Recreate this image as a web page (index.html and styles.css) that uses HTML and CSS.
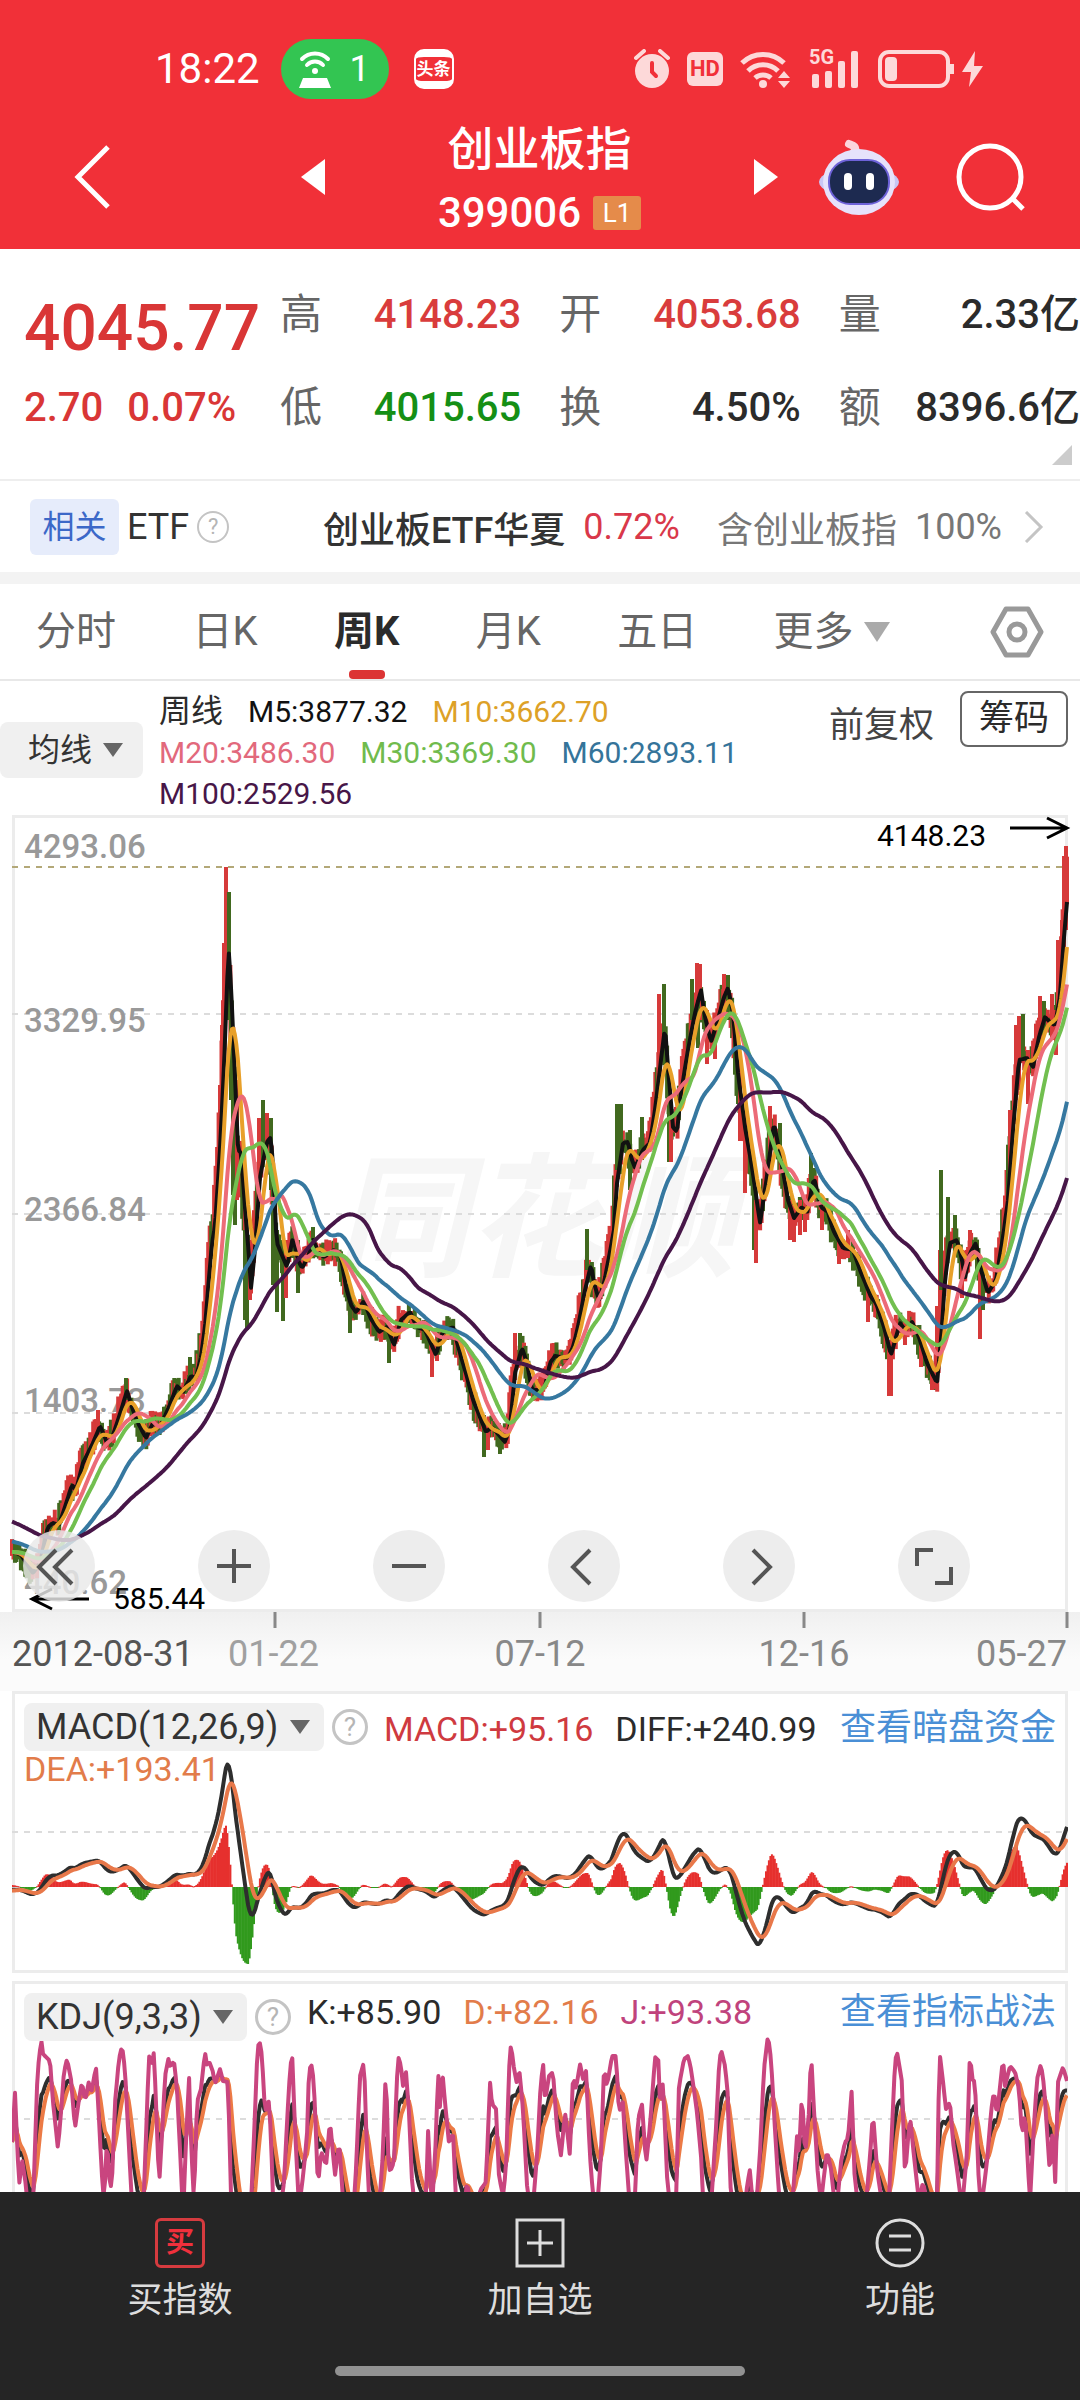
FILE: index.html
```html
<!DOCTYPE html>
<html lang="zh-CN">
<head>
  <meta charset="UTF-8" />
  <meta name="viewport" content="width=device-width, initial-scale=1.0"/>
  <title>创业板指 399006</title>
  <link rel="stylesheet" href="styles.css">
</head>
<body>
  <header class="top">
    <div class="status">
      <span class="clock">18:22</span>
      <span class="hotspot">
        <svg width="32" height="38" viewBox="0 0 32 38" fill="none" stroke="#fff" stroke-width="4" stroke-linecap="round">
          <path d="M3 9a18 18 0 0 1 26 0M8 15a11 11 0 0 1 16 0"/>
          <circle cx="16" cy="21" r="3" fill="#fff" stroke="none"/>
          <path d="M4 28h24l4 10H0z" fill="#fff" stroke="none"/>
        </svg>
        1
      </span>
      <span class="news">头条</span>
      <span class="status-icons">
        <svg width="36" height="40" viewBox="0 0 36 40">
          <circle cx="18" cy="22" r="17" fill="#fdd9d9"/>
          <path d="M2 9l8-7M34 9l-8-7" stroke="#fdd9d9" stroke-width="4" stroke-linecap="round"/>
          <path d="M18 14v9l4 4" stroke="#f13038" stroke-width="4" fill="none" stroke-linecap="round"/>
        </svg>
        <span class="hd">HD</span>
        <svg width="52" height="40" viewBox="0 0 52 40" fill="none" stroke="#fdd9d9" stroke-width="5">
          <path d="M2 14a30 30 0 0 1 42 0M8 22a21 21 0 0 1 30 0M15 29a12 12 0 0 1 16 0"/>
          <circle cx="23" cy="35" r="4" fill="#fdd9d9" stroke="none"/>
          <path d="M38 29l6-7 6 7zM38 32l6 7 6-7z" fill="#fdd9d9" stroke="none"/>
        </svg>
        <span class="signal">
          <small>5G</small>
          <svg width="52" height="40" viewBox="0 0 52 40" fill="#fdd9d9">
            <rect x="3" y="25" width="7" height="14" rx="2"/><rect x="16" y="22" width="7" height="17" rx="2"/>
            <rect x="29" y="12" width="7" height="27" rx="2"/><rect x="42" y="2" width="7" height="37" rx="2"/>
          </svg>
        </span>
        <svg width="108" height="40" viewBox="0 0 108 40">
          <rect x="2" y="3" width="68" height="34" rx="9" fill="none" stroke="#fdd9d9" stroke-width="4"/>
          <rect x="7" y="8" width="12" height="24" rx="4" fill="#fdd9d9"/>
          <path d="M74 15v10" stroke="#fdd9d9" stroke-width="4"/>
          <path d="M97 2L84 23h9l-2 15 14-21h-9z" fill="#fdd9d9"/>
        </svg>
      </span>
    </div>
    <div class="title-bar">
      <button class="icon-btn" aria-label="返回">
        <svg width="40" height="66" viewBox="0 0 40 66" fill="none" stroke="#fff" stroke-width="5"><path d="M35 3L5 33l30 30"/></svg>
      </button>
      <button class="icon-btn prev" aria-label="上一只">
        <svg width="24" height="36" viewBox="0 0 24 36" fill="#fff"><path d="M24 0v36L0 18z"/></svg>
      </button>
      <div class="title">
        <h1>创业板指</h1>
        <div class="code">399006 <span>L1</span></div>
      </div>
      <button class="icon-btn next" aria-label="下一只">
        <svg width="24" height="36" viewBox="0 0 24 36" fill="#fff"><path d="M0 0v36l24-18z"/></svg>
      </button>
      <button class="icon-btn robot" aria-label="助手">
        <svg width="82" height="78" viewBox="0 0 82 78">
          <path d="M36 14c4-6-3-7-5-8" stroke="#fbd5dc" stroke-width="8" fill="none" stroke-linecap="round"/>
          <ellipse cx="41" cy="44" rx="40" ry="15" fill="#c9c6f5"/>
          <ellipse cx="41" cy="44" rx="36" ry="33" fill="#e6e2fb"/>
          <rect x="11" y="22" width="60" height="44" rx="21" fill="#1d2a50" stroke="#6d62d8" stroke-width="2"/>
          <rect x="26" y="35" width="8" height="17" rx="4" fill="#fff"/><rect x="48" y="35" width="8" height="17" rx="4" fill="#fff"/>
        </svg>
      </button>
      <button class="icon-btn" aria-label="搜索">
        <svg width="70" height="70" viewBox="0 0 70 70" fill="none" stroke="#fff" stroke-width="5"><circle cx="34" cy="35" r="31"/><path d="M56 56l11 11"/></svg>
      </button>
    </div>
  </header>

  <section class="quote">
    <div class="now">
      <strong>4045.77</strong>
      <div><span>2.70</span><span>0.07%</span></div>
    </div>
    <dl>
      <div><dt>高</dt><dd class="up">4148.23</dd></div>
      <div><dt>开</dt><dd class="up">4053.68</dd></div>
      <div><dt>量</dt><dd>2.33亿</dd></div>
      <div><dt>低</dt><dd class="down">4015.65</dd></div>
      <div><dt>换</dt><dd>4.50%</dd></div>
      <div><dt>额</dt><dd>8396.6亿</dd></div>
    </dl>
    <i class="corner"></i>
  </section>

  <a class="etf" href="#etf">
    <span class="tag">相关</span>
    <span>ETF</span>
    <span class="help">?</span>
    <span class="etf-name">创业板ETF华夏</span>
    <span class="etf-rate">0.72%</span>
    <span class="etf-note">含创业板指</span>
    <span class="etf-pct">100%</span>
    <svg width="20" height="32" viewBox="0 0 20 32" fill="none" stroke="#c4c4c4" stroke-width="3"><path d="M2 1l15 15L2 31"/></svg>
  </a>

  <nav class="tabs">
    <button>分时</button>
    <button>日K</button>
    <button class="selected">周K</button>
    <button>月K</button>
    <button>五日</button>
    <button class="more">更多<i class="caret"></i></button>
    <button class="setting" aria-label="设置">
      <svg width="54" height="52" viewBox="0 0 54 52" fill="none" stroke="#999" stroke-width="5" stroke-linejoin="round"><path d="M16 3h22l13 23-13 23H16L3 26z"/><circle cx="27" cy="26" r="8"/></svg>
    </button>
  </nav>

  <section class="legend">
    <label class="picker line-picker">
      <select aria-label="指标线"><option>均线</option></select>
    </label>
    <div class="values">
      <span class="week">周线</span><span class="m5">M5:3877.32</span><span class="m10">M10:3662.70</span>
      <span class="m20">M20:3486.30</span><span class="m30">M30:3369.30</span><span class="m60">M60:2893.11</span>
      <span class="m100">M100:2529.56</span>
    </div>
    <button class="adjust">前复权</button>
    <button class="chips">筹码</button>
  </section>

  <section class="panel price">
    <svg class="chart" id="price" viewBox="12 815 1056 797">
      <text class="watermark" x="334" y="1266">同花顺</text>
      <path class="grid" d="M12 1014H1068M12 1214H1068M12 1413H1068"/>
      <path class="top-line" d="M12 867H1068"/>
      <g class="scale">
        <text x="24" y="858">4293.06</text>
        <text x="24" y="1032">3329.95</text>
        <text x="24" y="1221">2366.84</text>
        <text x="24" y="1412">1403.73</text>
        <text x="24" y="1594">440.62</text>
      </g>
      <g id="priceLines"></g>
      <g class="mark">
        <text x="877" y="846">4148.23</text>
        <path d="M1010 828h56M1047 818l20 10-20 10"/>
        <text x="113" y="1609">585.44</text>
        <path d="M89 1599H33M52 1589l-20 10 20 10"/>
      </g>
    </svg>
    <div class="tools">
      <button aria-label="最早"><svg viewBox="0 0 72 72"><path d="M33 20L16 37l17 17M49 20L32 37l17 17"/></svg></button>
      <button aria-label="放大"><svg viewBox="0 0 72 72"><path d="M19 36h34M36 19v34"/></svg></button>
      <button aria-label="缩小"><svg viewBox="0 0 72 72"><path d="M19 36h34"/></svg></button>
      <button aria-label="左移"><svg viewBox="0 0 72 72"><path d="M42 20L25 37l17 17"/></svg></button>
      <button aria-label="右移"><svg viewBox="0 0 72 72"><path d="M30 20l17 17-17 17"/></svg></button>
      <button aria-label="全屏"><svg viewBox="0 0 72 72"><path d="M19 36V20h16M37 53h16V37"/></svg></button>
    </div>
  </section>

  <svg class="axis" viewBox="0 0 1080 79">
    <path d="M275 0v16M540 0v16M804 0v16M1067 0v16"/>
    <text class="first" x="12" y="54">2012-08-31</text>
    <text class="fade" x="228" y="54">01-22</text>
    <text x="540" y="54" text-anchor="middle">07-12</text>
    <text x="804" y="54" text-anchor="middle">12-16</text>
    <text x="1067" y="54" text-anchor="end">05-27</text>
  </svg>

  <section class="panel">
    <svg class="chart" viewBox="12 1692 1056 282">
      <path class="grid" d="M12 1833H1068"/>
      <g id="macd"></g>
    </svg>
    <div class="panel-head">
      <label class="picker"><select aria-label="指标"><option>MACD(12,26,9)</option></select></label>
      <span class="help">?</span>
      <span class="v-red">MACD:+95.16</span>
      <span>DIFF:+240.99</span>
      <a href="#fund">查看暗盘资金</a>
      <span class="v-orange second">DEA:+193.41</span>
    </div>
  </section>

  <section class="panel kdj">
    <svg class="chart" viewBox="12 1982 1056 211">
      <path class="grid" d="M12 2120H1068"/>
      <g id="kdj"></g>
    </svg>
    <div class="panel-head">
      <label class="picker"><select aria-label="指标"><option>KDJ(9,3,3)</option></select></label>
      <span class="help">?</span>
      <span>K:+85.90</span>
      <span class="v-orange">D:+82.16</span>
      <span class="v-pink">J:+93.38</span>
      <a href="#how">查看指标战法</a>
    </div>
  </section>

  <footer class="bottom">
    <div class="actions">
      <button><span class="buy">买</span>买指数</button>
      <button>
        <svg width="50" height="50" viewBox="0 0 50 50" fill="none" stroke="#ddd" stroke-width="3"><path d="M2 2h46v46H2zM12 25h26M25 12v26"/></svg>
        加自选
      </button>
      <button>
        <svg width="50" height="50" viewBox="0 0 50 50" fill="none" stroke="#ddd" stroke-width="3"><circle cx="25" cy="25" r="23"/><path d="M14 18h22M14 32h22"/></svg>
        功能
      </button>
    </div>
    <div class="home-bar"></div>
  </footer>

  <script src="chart.js"></script>
</body>
</html>
```
FILE: styles.css
```css
* {
  box-sizing: border-box;
}

body {
  margin: 0;
  min-height: 100vh;
  display: flex;
  flex-direction: column;
  background: #fff;
  color: #2b2b2b;
  font-family: Roboto, "Noto Sans CJK SC", sans-serif;
}

button, select {
  font: inherit;
  color: inherit;
  background: none;
  border: none;
  padding: 0;
  margin: 0;
  cursor: pointer;
}

a {
  text-decoration: none;
}

svg {
  display: block;
  flex: none;
}

/* header */
.top {
  background: #f13038;
  color: #fff;
  height: 249px;
}

.status {
  display: flex;
  align-items: center;
  height: 118px;
  padding: 20px 94px 0 155px;
}

.clock {
  font-size: 42px;
  line-height: 48px;
}

.hotspot {
  display: flex;
  align-items: center;
  justify-content: center;
  gap: 18px;
  width: 108px;
  height: 60px;
  margin-left: 21px;
  border-radius: 30px;
  background: #33c552;
  font-size: 36px;
}

.news {
  width: 40px;
  margin-left: 25px;
  border: solid #fff;
  border-width: 8px 2px;
  border-radius: 10px;
  font-size: 17px;
  line-height: 24px;
  font-weight: bold;
  text-align: center;
}

.status-icons {
  display: flex;
  align-items: center;
  gap: 17px;
  margin-left: auto;
}

.hd {
  width: 36px;
  border-radius: 6px;
  background: #fdd9d9;
  color: #f13038;
  font-size: 22px;
  font-weight: bold;
  line-height: 34px;
  text-align: center;
}

.signal {
  position: relative;
}

.signal small {
  position: absolute;
  top: -4px;
  left: 0;
  color: #fdd9d9;
  font-size: 20px;
  font-weight: bold;
}

.title-bar {
  display: flex;
  align-items: center;
  height: 127px;
  padding: 0 54px 0 73px;
}

.icon-btn {
  padding-bottom: 10px;
}

.prev {
  margin-left: 188px;
}

.title {
  flex: 1;
  text-align: center;
}

.title h1 {
  margin: 0;
  font-size: 46px;
  font-weight: 500;
  line-height: 62px;
}

.code {
  display: flex;
  align-items: center;
  justify-content: center;
  gap: 12px;
  font-size: 42px;
  font-weight: 500;
  line-height: 66px;
}

.code span {
  width: 48px;
  background: #e58b4a;
  border-radius: 3px;
  font-size: 26px;
  font-weight: 400;
  line-height: 34px;
}

.robot {
  margin: 0 56px 0 40px;
}

/* quote */
.quote {
  position: relative;
  display: flex;
  height: 232px;
  padding: 36px 0 0 24px;
  border-bottom: 2px solid #eee;
}

.now {
  width: 256px;
  color: #d93636;
  font-weight: 500;
}

.now strong {
  display: block;
  font-size: 64px;
  font-weight: 500;
  line-height: 88px;
}

.now div {
  display: flex;
  gap: 24px;
  font-size: 40px;
  line-height: 70px;
}

.quote dl {
  flex: 1;
  display: grid;
  grid-template-columns: repeat(3, 1fr);
  grid-auto-rows: 60px;
  gap: 33px 38px;
  margin: 0;
}

.quote dl div {
  display: flex;
  justify-content: space-between;
  font-size: 40px;
  line-height: 60px;
}

.quote dt {
  color: #666;
  font-size: 42px;
}

.quote dd {
  margin: 0;
  font-weight: 500;
}

.quote .up {
  color: #d93c3c;
}

.quote .down {
  color: #158f15;
}

.corner {
  position: absolute;
  right: 8px;
  bottom: 14px;
  border-left: 20px solid transparent;
  border-bottom: 20px solid #ccc;
}

/* etf */
.etf {
  display: flex;
  align-items: center;
  height: 91px;
  padding: 0 36px 0 30px;
  color: #333;
  font-size: 36px;
}

.tag {
  width: 89px;
  margin-right: 8px;
  border-radius: 6px;
  background: #e6ecfb;
  color: #3c68c8;
  font-size: 32px;
  line-height: 56px;
  text-align: center;
}

.help {
  flex: none;
  width: 36px;
  border: 3px solid #c4c4c4;
  border-radius: 50%;
  color: #b5b5b5;
  font-size: 26px;
  line-height: 30px;
  text-align: center;
}

.etf .help {
  width: 32px;
  margin-left: 8px;
  border-width: 2px;
  font-size: 22px;
  line-height: 28px;
}

.etf-name {
  margin-left: auto;
  font-weight: 500;
}

.etf-rate {
  margin: 0 37px 0 18px;
  color: #d9384a;
}

.etf-note, .etf-pct {
  color: #777;
}

.etf-pct {
  margin: 0 22px 0 18px;
}

/* tabs */
.tabs {
  display: flex;
  justify-content: space-between;
  align-items: center;
  height: 109px;
  padding: 0 36px;
  border-top: 12px solid #f3f3f3;
  border-bottom: 2px solid #e8e8e8;
  color: #666;
  font-size: 40px;
  line-height: 95px;
}

.selected {
  position: relative;
  color: #2b2b2b;
  font-weight: bold;
}

.selected::after {
  content: "";
  position: absolute;
  left: 50%;
  bottom: 0;
  width: 36px;
  height: 9px;
  margin-left: -18px;
  border-radius: 4px;
  background: #dc3434;
}

.more {
  display: flex;
  align-items: center;
  gap: 10px;
}

.caret {
  border: 13px solid transparent;
  border-top: 20px solid #aaa;
  border-bottom: none;
}

.setting {
  margin-left: 24px;
}

/* legend */
.legend {
  display: flex;
  align-items: flex-start;
  height: 134px;
  padding: 10px 12px 0 0;
}

.picker {
  position: relative;
  flex: none;
  background: #f0f0f0;
  border-radius: 8px;
}

.picker select {
  appearance: none;
  display: block;
  height: 48px;
  padding: 0 45px 0 12px;
  color: #333;
  font-size: 36px;
  line-height: 48px;
}

.picker::after {
  content: "";
  position: absolute;
  right: 14px;
  top: 50%;
  margin-top: -7px;
  border: 10px solid transparent;
  border-top: 14px solid #666;
  border-bottom: none;
  pointer-events: none;
}

.line-picker {
  margin-top: 31px;
}

.line-picker select {
  height: 56px;
  padding: 0 50px 0 28px;
  font-size: 32px;
}

.line-picker::after {
  right: 20px;
}

.values {
  flex: 1;
  display: flex;
  flex-wrap: wrap;
  column-gap: 25px;
  margin: 0 50px 0 16px;
  font-size: 30px;
  line-height: 41px;
}

.week { font-size: 32px; }
.m5 { color: #111; }
.m10 { color: #dda127; margin-right: 150px; }
.m20 { color: #e2697c; }
.m30 { color: #70bb4d; }
.m60 { color: #35749a; }
.m100 { color: #471648; }

.adjust {
  margin-right: 26px;
  color: #444;
  font-size: 35px;
  line-height: 70px;
}

.chips {
  width: 108px;
  border: 2px solid #666;
  border-radius: 8px;
  font-size: 35px;
  line-height: 52px;
}

/* charts */
.panel {
  position: relative;
  display: grid;
  margin: 0 12px;
  border: 3px solid #ececec;
}

.panel > * {
  grid-area: 1 / 1;
}

.chart {
  width: calc(100% + 6px);
  height: auto;
  margin: -3px;
}

.price .chart {
  overflow: visible;
}

.watermark {
  fill: #f6f6f6;
  font-size: 134px;
  font-weight: 700;
  font-style: italic;
}

.grid {
  stroke: #dcdcdc;
  stroke-width: 2;
  stroke-dasharray: 6 6;
}

.top-line {
  stroke: #b3a878;
  stroke-width: 2;
  stroke-dasharray: 6 6;
}

.scale {
  fill: #999;
  font-size: 33px;
  font-weight: 500;
}

.mark {
  fill: #000;
  font-size: 30px;
}

.mark path {
  fill: none;
  stroke: #000;
  stroke-width: 3;
}

.line {
  fill: none;
  stroke-width: 4;
  stroke-linejoin: round;
}

.tools {
  position: absolute;
  left: 8px;
  bottom: 7px;
  display: flex;
  gap: 103px;
}

.tools button {
  width: 72px;
  height: 72px;
  border-radius: 50%;
  background: rgba(233, 233, 233, 0.82);
}

.tools path {
  fill: none;
  stroke: #555;
  stroke-width: 4;
}

.axis {
  width: 100%;
  height: auto;
  background: linear-gradient(#f0f0f0, #fbfbfb 60%);
  fill: #888;
  font-size: 36px;
}

.axis path {
  stroke: #888;
  stroke-width: 3;
}

.axis .first {
  fill: #555;
}

.axis .fade {
  fill: #a0a0a0;
}

.panel-head {
  display: flex;
  flex-wrap: wrap;
  align-items: flex-start;
  align-content: flex-start;
  padding: 9px 9px 0 9px;
  font-size: 34px;
  line-height: 42px;
  position: relative;
}

.panel-head .help {
  margin: 6px 16px 0 8px;
}

.panel-head > span {
  margin-right: 22px;
  margin-top: 5px;
}

.panel-head span + a {
  margin-left: -12px;
}

.panel-head a {
  flex: 1;
  color: #4a8fd6;
  font-size: 36px;
  line-height: 50px;
  text-align: right;
}

.panel-head .second {
  width: 100%;
  margin-top: -5px;
}

.v-red { color: #cf3a40; }
.v-orange { color: #e27c4a; }
.v-pink { color: #c0437c; }

.kdj {
  margin-top: 8px;
  border-bottom: none;
}

.kdj .chart {
  margin-bottom: 0;
}

.kdj .panel-head > span:not(.help) {
  margin-top: -2px;
}

.kdj .panel-head a {
  margin-top: -6px;
}

/* bottom */
.bottom {
  flex: 1;
  position: relative;
  background: #252525;
  color: #ddd;
  padding-bottom: 24px;
  display: flex;
  flex-direction: column;
  justify-content: space-between;
  align-items: center;
}

.actions {
  display: grid;
  grid-template-columns: repeat(3, 1fr);
  width: 100%;
  padding-top: 26px;
}

.actions button {
  display: flex;
  flex-direction: column;
  align-items: center;
  gap: 7px;
  font-size: 35px;
  line-height: 52px;
}

.buy {
  width: 50px;
  border: 3px solid #d63b3f;
  border-radius: 6px;
  color: #f0303c;
  font-size: 28px;
  font-weight: bold;
  line-height: 44px;
}

.home-bar {
  width: 38%;
  height: 10px;
  border-radius: 5px;
  background: #929292;
}
```
FILE: chart.js
```js
const LEFT = 12;
const RIGHT = 1067;
const WEEKS = 716;
const STEP = (RIGHT - LEFT) / (WEEKS - 1);

// 5-week average, as x,y pairs
const base = [
  14,1552, 21,1555, 33,1573, 40,1563, 45,1540, 48,1527, 53,1523, 59,1525, 64,1510, 72,1485, 76,1490, 83,1463,
  93,1443, 100,1426, 104,1435, 107,1443, 112,1438, 119,1417, 127,1391, 133,1410, 138,1423, 146,1438, 153,1423,
  160,1427, 169,1407, 177,1386, 183,1392, 191,1376, 196,1378, 201,1357, 205,1327, 208,1290, 212,1243, 215,1227,
  220,1150, 224,1067, 227,983, 229,952, 231,987, 234,1053, 238,1150, 241,1153, 245,1207, 249,1257, 251,1288,
  255,1250, 260,1177, 267,1142, 271,1137, 274,1183, 276,1230, 277,1243, 284,1260, 287,1267, 293,1237, 298,1260,
  302,1268, 308,1257, 313,1240, 319,1253, 324,1257, 334,1250, 341,1257, 346,1287, 351,1305, 356,1312, 364,1301,
  370,1317, 379,1332, 387,1327, 394,1345, 401,1320, 410,1312, 417,1327, 425,1330, 436,1355, 442,1333, 453,1327,
  460,1353, 467,1377, 473,1400, 480,1417, 486,1432, 492,1427, 505,1442, 510,1427, 515,1373, 522,1348, 527,1363,
  532,1390, 540,1390, 545,1387, 550,1363, 555,1356, 568,1358, 573,1347, 578,1327, 585,1290, 591,1265, 594,1283,
  599,1300, 604,1283, 609,1257, 614,1230, 617,1183, 623,1143, 628,1142, 631,1157, 635,1168, 643,1150, 650,1143,
  655,1110, 661,1060, 665,1027, 668,1067, 673,1127, 677,1132, 681,1093, 688,1050, 695,1013, 701,990, 705,1017,
  711,1042, 717,1023, 724,997, 728,988, 733,1013, 738,1073, 745,1127, 752,1167, 760,1223, 766,1183, 774,1123,
  781,1160, 788,1200, 794,1218, 802,1207, 807,1213, 814,1178, 821,1207, 828,1212, 833,1230, 843,1248, 853,1250,
  860,1270, 871,1297, 876,1303, 884,1327, 891,1355, 900,1323, 905,1330, 912,1322, 919,1337, 927,1363, 937,1383,
  941,1340, 945,1280, 950,1243, 957,1240, 962,1260, 965,1278, 970,1253, 976,1243, 981,1270, 988,1293, 996,1280,
  1003,1237, 1008,1200, 1013,1130, 1019,1060, 1027,1058, 1033,1067, 1039,1037, 1045,1017, 1051,1023, 1055,1025,
  1060,997, 1063,950, 1067,902, 1071,860
];

// long bars: x, top, bottom, 1 = up
const spikes = [
  [98,1410,1440,1], [126,1378,1400,0], [190,1357,1385,0], [222,1025,1090,1], [224,943,1040,1], [226,867,1010,1],
  [229,892,1020,0], [231,1000,1100,0], [233,1100,1195,0], [235,1170,1225,0], [237,1080,1200,1], [245,1230,1320,0],
  [247,1230,1330,0], [250,1240,1300,1], [259,1118,1180,1], [263,1100,1160,0], [267,1113,1160,1], [271,1118,1190,0],
  [273,1180,1285,0], [277,1230,1312,0], [283,1240,1321,0], [286,1240,1298,1], [298,1240,1293,0], [313,1227,1250,0],
  [350,1290,1333,0], [389,1325,1363,0], [432,1340,1377,1], [484,1415,1457,0], [488,1420,1450,1], [500,1430,1454,0],
  [515,1333,1380,1], [520,1333,1360,0], [587,1229,1270,0], [617,1104,1170,0], [621,1104,1160,0], [630,1130,1190,0],
  [642,1117,1160,0], [659,994,1060,1], [664,984,1040,0], [669,1090,1162,0], [671,1120,1162,1], [692,979,1020,0],
  [697,963,1010,1], [700,964,1020,1], [698,1000,1048,0], [707,1010,1064,1], [715,1020,1059,1], [724,974,1010,1],
  [728,975,1020,0], [740,1060,1141,1], [745,1110,1193,1], [754,1180,1250,0], [756,1200,1263,1], [770,1106,1170,1],
  [780,1123,1160,0], [790,1200,1240,1], [794,1205,1242,1], [800,1200,1235,1], [805,1200,1232,1], [811,1153,1190,0],
  [822,1200,1230,1], [839,1235,1264,1], [848,1230,1258,1], [868,1290,1322,1], [889,1340,1396,1], [891,1340,1396,1],
  [905,1320,1345,1], [921,1340,1367,1], [932,1370,1390,1], [937,1306,1388,1], [940,1250,1340,1], [941,1170,1290,0],
  [948,1197,1250,0], [955,1215,1250,0], [962,1250,1298,1], [970,1230,1260,1], [980,1260,1339,1], [983,1260,1310,0],
  [1010,1110,1180,1], [1016,1025,1100,1], [1019,1016,1090,1], [1023,1014,1060,0], [1028,1050,1104,1],
  [1040,996,1050,1], [1044,1001,1030,0], [1052,994,1040,1], [1056,1010,1055,1], [1058,940,1020,1],
  [1062,920,1000,1], [1064,856,940,1], [1066,846,930,1]
];

// J line of KDJ
const jLine = [
  12,2143, 15,2093, 19,2187, 22,2160, 26,2187, 29,2225, 33,2210, 37,2087, 39,2057, 42,2040, 43,2055, 50,2062,
  53,2103, 58,2150, 61,2113, 64,2073, 67,2060, 71,2080, 75,2130, 79,2100, 82,2083, 85,2102, 89,2082, 91,2095,
  96,2068, 98,2103, 102,2177, 104,2203, 107,2140, 110,2190, 112,2183, 115,2103, 119,2060, 122,2047, 125,2070,
  128,2130, 132,2205, 138,2237, 143,2217, 146,2137, 149,2057, 152,2065, 154,2052, 157,2130, 159,2187, 162,2137,
  165,2077, 169,2057, 170,2068, 174,2062, 177,2090, 181,2170, 183,2220, 186,2143, 189,2077, 191,2143, 194,2203,
  197,2103, 201,2090, 205,2053, 207,2067, 209,2062, 213,2073, 215,2085, 220,2070, 223,2082, 228,2083, 230,2157,
  232,2237, 241,2260, 250,2230, 254,2137, 257,2063, 259,2039, 262,2057, 265,2113, 269,2102, 271,2137, 273,2203,
  278,2230, 284,2183, 289,2087, 292,2050, 295,2130, 299,2210, 303,2177, 307,2137, 309,2070, 312,2066, 314,2087,
  318,2188, 321,2152, 324,2160, 326,2167, 330,2122, 335,2177, 339,2143, 342,2183, 344,2223, 351,2253, 356,2170,
  360,2077, 364,2063, 367,2153, 370,2220, 377,2237, 383,2153, 386,2065, 388,2157, 390,2173, 394,2163, 396,2103,
  398,2057, 401,2067, 403,2087, 406,2073, 409,2113, 412,2183, 417,2223, 423,2217, 426,2203, 428,2130, 432,2210,
  436,2137, 438,2068, 440,2110, 442,2069, 445,2103, 449,2145, 453,2133, 456,2203, 463,2223, 467,2182, 472,2217,
  481,2190, 486,2183, 490,2083, 492,2105, 496,2110, 499,2177, 503,2197, 506,2170, 509,2070, 511,2045, 514,2070,
  517,2085, 519,2068, 523,2110, 527,2187, 532,2220, 537,2157, 540,2097, 543,2062, 545,2103, 549,2077, 553,2073,
  557,2130, 561,2157, 565,2113, 570,2157, 573,2077, 576,2090, 580,2065, 583,2080, 586,2072, 590,2157, 593,2197,
  597,2210, 601,2157, 604,2068, 607,2087, 612,2057, 616,2057, 619,2113, 623,2103, 625,2140, 629,2197, 635,2203,
  638,2120, 642,2105, 646,2165, 650,2127, 655,2058, 659,2062, 660,2110, 663,2083, 667,2177, 671,2217, 676,2203,
  679,2087, 684,2060, 688,2057, 691,2070, 697,2113, 701,2157, 704,2217, 710,2223, 716,2130, 719,2067, 721,2050,
  725,2067, 728,2097, 730,2183, 736,2237, 743,2237, 747,2187, 750,2170, 753,2210, 757,2197, 760,2153, 764,2070,
  768,2036, 771,2060, 775,2130, 779,2197, 786,2230, 793,2197, 797,2137, 799,2157, 802,2093, 805,2157, 809,2113,
  811,2051, 814,2113, 818,2177, 821,2203, 827,2152, 831,2170, 836,2217, 841,2163, 845,2143, 848,2140, 852,2087,
  854,2170, 859,2217, 865,2217, 870,2157, 873,2114, 877,2170, 881,2197, 888,2223, 892,2130, 895,2063, 897,2053,
  902,2083, 905,2177, 910,2117, 914,2157, 919,2203, 923,2183, 931,2223, 937,2203, 938,2120, 940,2057, 943,2083,
  946,2110, 950,2103, 953,2143, 957,2170, 962,2210, 967,2153, 970,2051, 972,2080, 975,2083, 979,2190, 982,2203,
  987,2163, 991,2113, 994,2092, 997,2117, 1003,2059, 1005,2087, 1010,2067, 1015,2073, 1019,2090, 1022,2137,
  1025,2113, 1030,2203, 1033,2143, 1037,2080, 1041,2065, 1044,2087, 1047,2130, 1050,2177, 1053,2123, 1055,2190,
  1058,2083, 1060,2077, 1063,2068, 1067,2082
];

function valueAt(points, x) {
  if (x <= points[0]) return points[1];
  for (let i = 2; i < points.length; i += 2) {
    if (x <= points[i]) {
      const t = (x - points[i - 2]) / (points[i] - points[i - 2]);
      return points[i - 1] + t * (points[i + 1] - points[i - 1]);
    }
  }
  return points[points.length - 1];
}

function xOf(week) {
  return LEFT + week * STEP;
}

function line(values, color) {
  const d = values.map((y, i) => `${xOf(i).toFixed(1)} ${y.toFixed(1)}`).join('L');
  return `<path class="line" stroke="${color}" d="M${d}"/>`;
}

function rect(x, y, h, color, w = 4) {
  return `<rect x="${(x - w / 2).toFixed(1)}" y="${y.toFixed(1)}" width="${w}" height="${Math.max(h, 1).toFixed(1)}" fill="${color}"/>`;
}

let seed = 7;
function random() {
  seed = (seed * 16807) % 2147483647;
  return seed / 2147483647;
}

// closes, with 100 earlier weeks so that the long averages have a start
const closes = [];
for (let i = -100; i < WEEKS; i++) {
  if (i < -60) closes.push(1491);
  else if (i < -30) closes.push(1530);
  else if (i < 0) closes.push(1552);
  else closes.push(valueAt(base, xOf(i) + 3));
}

function average(n) {
  const out = [];
  for (let i = 100; i < closes.length; i++) {
    let sum = 0;
    for (let k = 0; k < n; k++) sum += closes[i - k];
    out.push(sum / n);
  }
  return out;
}

function drawPrice() {
  let html = '';
  for (let i = 0; i < WEEKS; i++) {
    const c = closes[i + 100];
    const p = closes[i + 98];
    const up = random() < (c < p ? 0.8 : 0.3);
    const top = Math.min(c, p) - random() * 14;
    const bottom = Math.max(c, p) + random() * 12;
    html += rect(xOf(i), top, bottom - top, up ? '#d63a3a' : '#41691f');
  }
  spikes.forEach(([x, top, bottom, up]) => {
    html += rect(x, top, bottom - top, up ? '#d63a3a' : '#41691f');
  });
  const m5 = closes.slice(100).map((c, i) => valueAt(base, xOf(i)));
  html += line(m5, '#111');
  html += line(average(10), '#e8a02a');
  html += line(average(20), '#ec6b78');
  html += line(average(30), '#72bf4f');
  html += line(average(60), '#3678a0');
  html += line(average(100), '#471648');
  document.getElementById('priceLines').innerHTML = html;
}

function ema(values, n) {
  let last = values[0];
  return values.map(v => (last += (v - last) * 2 / (n + 1)));
}

function drawMacd() {
  const zero = 1888;
  const fast = ema(closes, 12);
  const slow = ema(closes, 26);
  const diff = fast.map((v, i) => (v - slow[i]) * 1.24);
  const dea = ema(diff, 9);
  let html = '';
  for (let i = 0; i < WEEKS; i++) {
    const h = (diff[i + 100] - dea[i + 100]) * 2;
    html += h < 0 ? rect(xOf(i), zero + h, -h, '#e6302e', 2) : rect(xOf(i), zero, h, '#319a1d', 2);
  }
  html += line(diff.slice(100).map(v => v + zero), '#2e2e2e');
  html += line(dea.slice(100).map(v => v + zero), '#e8784a');
  document.getElementById('macd').innerHTML = html;
}

function drawKdj() {
  const j = [];
  const k = [];
  const d = [];
  let last = 2143;
  for (let i = 0; i < WEEKS; i++) {
    const v = valueAt(jLine, xOf(i));
    last = (6 * last + v) / 7;
    j.push(v);
    d.push(last);
    k.push((v + 2 * last) / 3);
  }
  document.getElementById('kdj').innerHTML = line(k, '#2e2e2e') + line(d, '#ec7a45') + line(j, '#c9457f');
}

drawPrice();
drawMacd();
drawKdj();
```
